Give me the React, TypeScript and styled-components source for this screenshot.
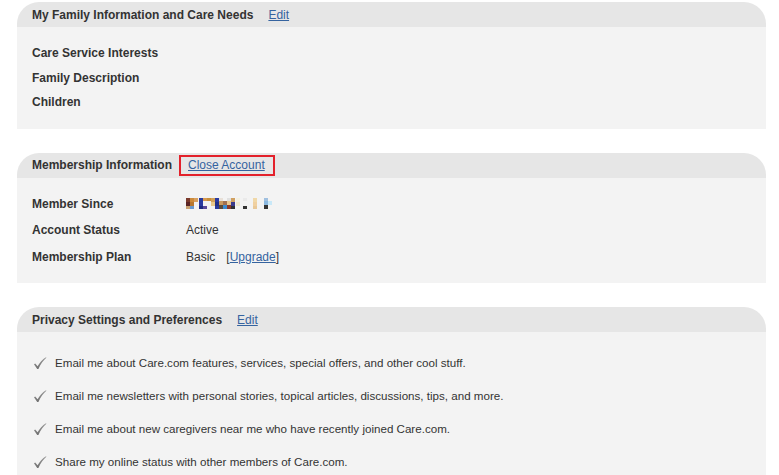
import { FC, ReactNode } from "react";
import styled, { createGlobalStyle } from "styled-components";

const GlobalStyle = createGlobalStyle`
  body {
    margin: 0;
    background: #fff;
    font-family: "Liberation Sans", Arial, sans-serif;
    color: #333;
  }
`;

const Page = styled.div`
  display: flex;
  flex-direction: column;
  gap: 24px;
  width: 749px;
  padding: 2px 0 0 17px;
`;

const Panel = styled.section`
  display: flex;
  flex-direction: column;
`;

const PanelHeader = styled.div`
  display: flex;
  align-items: center;
  gap: 15px;
  height: 25px;
  padding: 0 15px;
  background: #e6e6e6;
  border-radius: 22px 22px 0 0;
  font-size: 12px;
`;

const HeaderTitle = styled.span`
  font-weight: bold;
  color: #333;
`;

const Link = styled.a<{ $boxed?: boolean }>`
  color: #35639f;
  text-decoration: underline;
  font-size: 12px;
  cursor: pointer;
  ${(p) =>
    p.$boxed &&
    `
    margin-left: -8px;
    padding: 1px 8px 2px 7px;
    border: 2px solid #e3212b;
  `}
`;

const PanelBody = styled.div<{ $pad: string }>`
  background: #f3f3f3;
  padding: ${(p) => p.$pad};
  display: flex;
  flex-direction: column;
`;

const Label = styled.div<{ $h: number }>`
  font-size: 12px;
  font-weight: bold;
  line-height: ${(p) => p.$h}px;
`;

const InfoRow = styled.div`
  display: grid;
  grid-template-columns: 154px 1fr;
  align-items: center;
  height: 26.5px;
  font-size: 12px;
`;

const Value = styled.span`
  display: flex;
  align-items: center;
  gap: 11px;
`;

const PrefRow = styled.div`
  display: flex;
  align-items: center;
  gap: 8px;
  height: 33px;
  font-size: 11.6px;
  padding-left: 1px;
`;

const Check: FC = () => (
  <svg width="14" height="14" viewBox="0 0 14 14">
    <defs>
      <linearGradient id="chk" x1="0" y1="0" x2="0" y2="1">
        <stop offset="0" stopColor="#9a9a9a" />
        <stop offset="1" stopColor="#6f6f6f" />
      </linearGradient>
    </defs>
    <path
      d="M1 8.2 L2.2 7.4 L4.6 10.2 C6.6 6.6 9.4 3.4 13 1.2 L13.4 1.8 C10.2 4.4 7.6 8.2 5.4 13 L4.2 13 Z"
      fill="url(#chk)"
    />
  </svg>
);

const mosaic: [number, number, number, number, string][] = [
  [0, 0, 4, 4, "#7a3a2c"], [0, 4, 4, 4, "#5a2424"], [0, 8, 4, 3, "#c8a070"],
  [4, 0, 4, 4, "#cc8a3a"], [4, 4, 4, 4, "#b87830"], [4, 8, 4, 3, "#6a9ad0"],
  [8, 0, 4, 4, "#d8a060"], [8, 4, 4, 4, "#f2f2f2"],
  [13, 0, 4, 4, "#283a9c"], [13, 4, 4, 4, "#2a3aa0"], [13, 8, 4, 3, "#1e2a80"],
  [17, 8, 4, 3, "#5a4a9a"], [17, 0, 4, 3, "#d89a50"], [21, 0, 4, 3, "#c8903a"],
  [25, 0, 4, 4, "#d2a05a"], [25, 4, 4, 4, "#e8c88a"],
  [29, 0, 4, 4, "#2a3aa0"], [29, 4, 4, 4, "#20308a"], [29, 8, 4, 3, "#283a9c"],
  [33, 0, 4, 3, "#e8e0d8"], [33, 3, 4, 4, "#c89a60"], [33, 7, 4, 4, "#5a4a3a"],
  [37, 3, 4, 4, "#a07050"], [37, 7, 4, 4, "#3a8ad0"],
  [41, 0, 4, 3, "#e0e0e0"], [41, 3, 4, 4, "#e8c890"], [41, 7, 4, 4, "#8a3a2a"],
  [45, 0, 4, 4, "#d0a060"], [45, 4, 4, 4, "#3a3a8a"], [45, 8, 4, 3, "#303030"],
  [50, 0, 4, 4, "#f4f0e0"], [50, 4, 4, 4, "#f0e8d0"], [50, 8, 4, 3, "#f4f4f0"],
  [57, 0, 4, 3, "#eaeaea"], [57, 8, 4, 3, "#333"],
  [67, 0, 4, 4, "#f0d8a8"], [67, 4, 4, 4, "#f0d0a0"], [67, 8, 4, 3, "#e8c898"],
  [78, 0, 4, 3, "#a0c0e0"], [78, 3, 4, 4, "#8ab8e0"], [78, 7, 4, 4, "#333"],
  [82, 3, 4, 4, "#c8e8f8"],
];

const Mosaic: FC = () => (
  <svg width="86" height="11" viewBox="0 0 86 11" shapeRendering="crispEdges">
    {mosaic.map(([x, y, w, h, c], i) => (
      <rect key={i} x={x} y={y} width={w} height={h} fill={c} />
    ))}
  </svg>
);

interface ISection {
  title: string;
  link: string;
  boxed?: boolean;
  pad: string;
  children: ReactNode;
}

const Section: FC<ISection> = ({ title, link, boxed, pad, children }) => (
  <Panel>
    <PanelHeader>
      <HeaderTitle>{title}</HeaderTitle>
      <Link $boxed={boxed}>{link}</Link>
    </PanelHeader>
    <PanelBody $pad={pad}>{children}</PanelBody>
  </Panel>
);

const prefs = [
  "Email me about Care.com features, services, special offers, and other cool stuff.",
  "Email me newsletters with personal stories, topical articles, discussions, tips, and more.",
  "Email me about new caregivers near me who have recently joined Care.com.",
  "Share my online status with other members of Care.com.",
];

const App: FC = () => (
  <>
    <GlobalStyle />
    <Page>
      <Section title="My Family Information and Care Needs" link="Edit" pad="14px 15px 14px">
        <Label $h={24.5}>Care Service Interests</Label>
        <Label $h={24.5}>Family Description</Label>
        <Label $h={24.5}>Children</Label>
      </Section>
      <Section title="Membership Information" link="Close Account" boxed pad="13px 15px 13px">
        <InfoRow>
          <Label $h={26}>Member Since</Label>
          <Value>
            <Mosaic />
          </Value>
        </InfoRow>
        <InfoRow>
          <Label $h={26}>Account Status</Label>
          <Value>Active</Value>
        </InfoRow>
        <InfoRow>
          <Label $h={26}>Membership Plan</Label>
          <Value>
            Basic
            <span>
              [<Link>Upgrade</Link>]
            </span>
          </Value>
        </InfoRow>
      </Section>
      <Section title="Privacy Settings and Preferences" link="Edit" pad="14px 15px 20px">
        {prefs.map((t) => (
          <PrefRow key={t}>
            <Check />
            <span>{t}</span>
          </PrefRow>
        ))}
      </Section>
    </Page>
  </>
);

export default App;
